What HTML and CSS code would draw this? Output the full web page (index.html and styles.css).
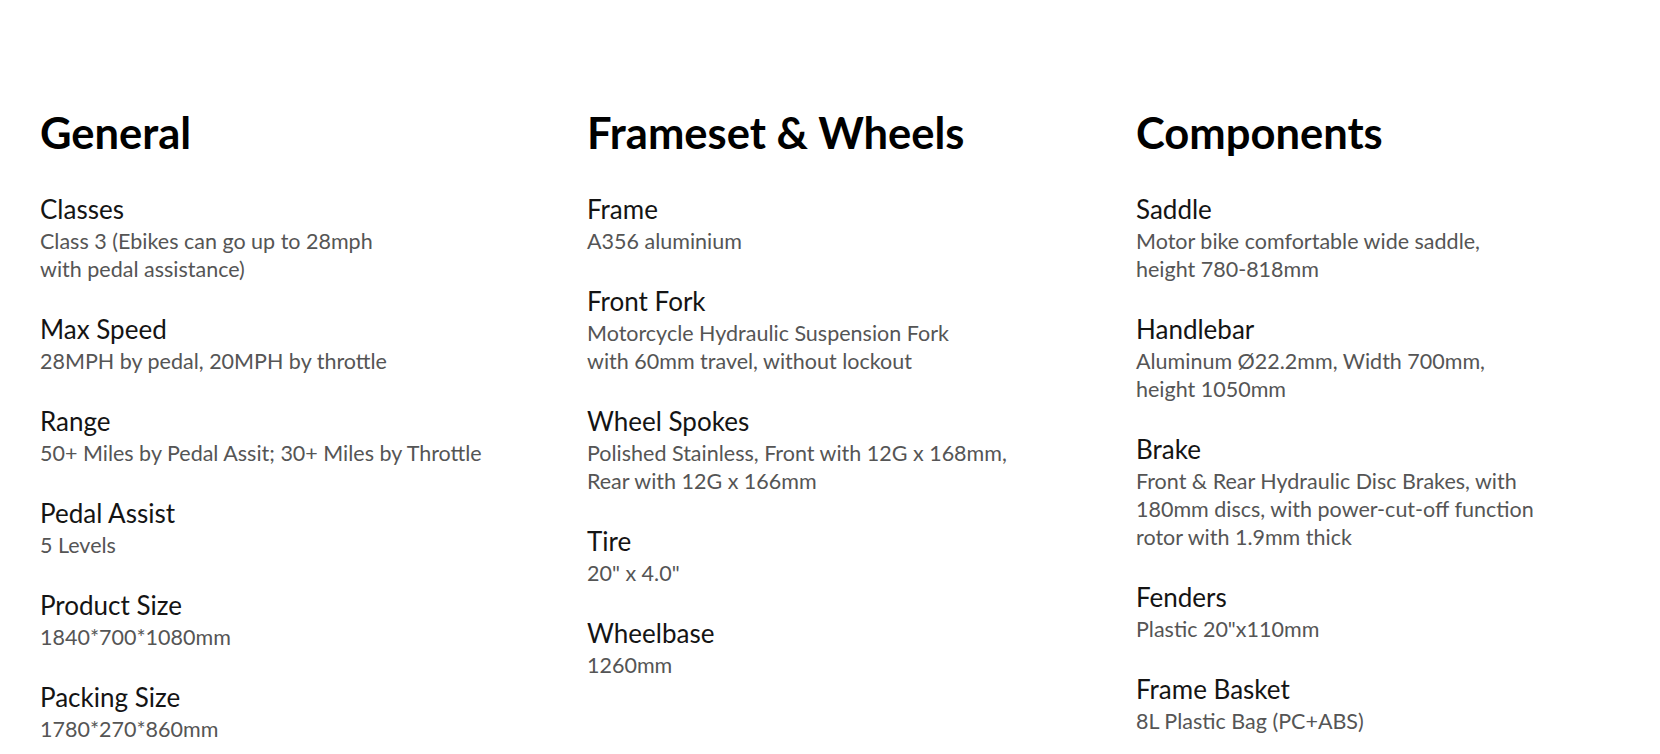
FILE: index.html
```html
<!DOCTYPE html>
<html lang="en">
<head>
<meta charset="utf-8">
<title>Specifications</title>
<link rel="stylesheet" href="styles.css">
</head>
<body>
<main class="specs">
  <section class="col">
    <h2 class="col-title">General</h2>
    <div class="item"><div class="label">Classes</div><div class="desc">Class 3 (Ebikes can go up to 28mph<br>with pedal assistance)</div></div>
    <div class="item"><div class="label">Max Speed</div><div class="desc">28MPH by pedal, 20MPH by throttle</div></div>
    <div class="item"><div class="label">Range</div><div class="desc">50+ Miles by Pedal Assit; 30+ Miles by Throttle</div></div>
    <div class="item"><div class="label">Pedal Assist</div><div class="desc">5 Levels</div></div>
    <div class="item"><div class="label">Product Size</div><div class="desc">1840*700*1080mm</div></div>
    <div class="item"><div class="label">Packing Size</div><div class="desc">1780*270*860mm</div></div>
  </section>
  <section class="col">
    <h2 class="col-title">Frameset &amp; Wheels</h2>
    <div class="item"><div class="label">Frame</div><div class="desc">A356 aluminium</div></div>
    <div class="item"><div class="label">Front Fork</div><div class="desc">Motorcycle Hydraulic Suspension Fork<br>with 60mm travel, without lockout</div></div>
    <div class="item"><div class="label">Wheel Spokes</div><div class="desc">Polished Stainless, Front with 12G x 168mm,<br>Rear with 12G x 166mm</div></div>
    <div class="item"><div class="label">Tire</div><div class="desc">20" x 4.0"</div></div>
    <div class="item"><div class="label">Wheelbase</div><div class="desc">1260mm</div></div>
  </section>
  <section class="col">
    <h2 class="col-title">Components</h2>
    <div class="item"><div class="label">Saddle</div><div class="desc">Motor bike comfortable wide saddle,<br>height 780-818mm</div></div>
    <div class="item"><div class="label">Handlebar</div><div class="desc">Aluminum Ø22.2mm, Width 700mm,<br>height 1050mm</div></div>
    <div class="item"><div class="label">Brake</div><div class="desc">Front &amp; Rear Hydraulic Disc Brakes, with<br>180mm discs, with power-cut-off function<br>rotor with 1.9mm thick</div></div>
    <div class="item"><div class="label">Fenders</div><div class="desc">Plastic 20"x110mm</div></div>
    <div class="item"><div class="label">Frame Basket</div><div class="desc">8L Plastic Bag (PC+ABS)</div></div>
  </section>
</main>
</body>
</html>
```
FILE: styles.css
```css
html, body {
  margin: 0;
  padding: 0;
  background: #ffffff;
}
body {
  font-family: Lato, "Liberation Sans", sans-serif;
  color: #1a1a1a;
}
.specs {
  display: grid;
  grid-template-columns: 547px 549px 1fr;
  padding: 107px 0 0 40px;
}
.col-title {
  margin: 0 0 35px 0;
  font-size: 43.5px;
  line-height: 50px;
  font-weight: 700;
  color: #000;
}
.item {
  margin-bottom: 29px;
}
.label {
  font-size: 26px;
  line-height: 35px;
  color: #141414;
}
.desc {
  font-size: 21.5px;
  line-height: 28px;
  color: #555555;
  white-space: nowrap;
}
```
